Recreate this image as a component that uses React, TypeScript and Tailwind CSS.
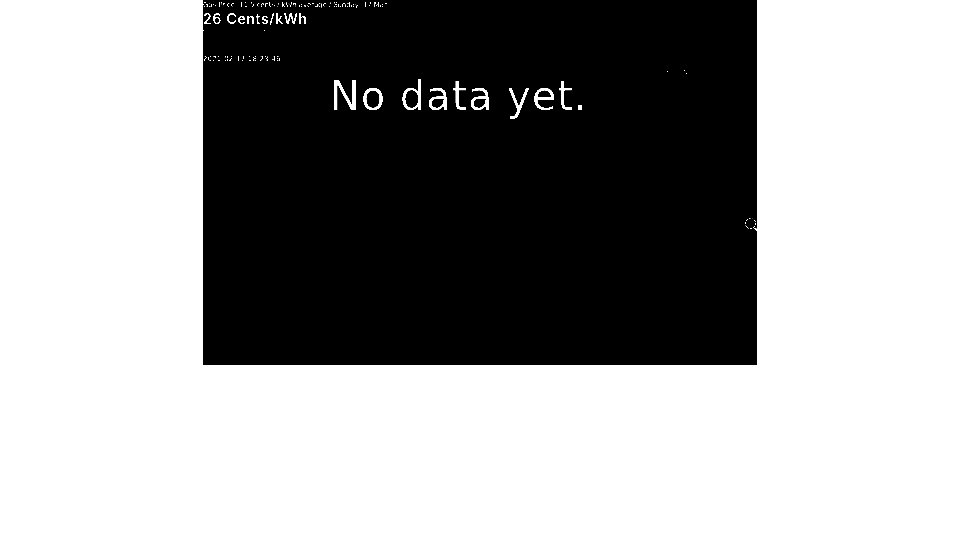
export default function App() {
  return (
    <div className="min-h-screen bg-white contrast-[20] font-['DejaVu_Sans',sans-serif]">
      <div className="relative ml-[203px] flex h-[365px] w-[554px] flex-col overflow-hidden bg-black text-white">
        <p className="h-[10px] text-[7px] leading-[10px] whitespace-nowrap text-[#dcdcdc] tracking-[-0.1px]">Gas Price: 11.5 cents / kWh average / Sunday, 17 Mar</p>
        <p className="h-[18px] text-[14px] leading-[18px] tracking-[0.75px] font-['Inter',sans-serif] font-medium">26 Cents/kWh</p>
        <div className="mt-[2px] flex h-[1px] w-[62px] justify-between">
          <span className="w-[1px] bg-white" />
          <span className="w-[1px] bg-white" />
        </div>
        <p className="mt-[23px] h-[10px] text-[7px] leading-[10px] tracking-[0.17px] text-[#dcdcdc]">2021-02-17 18:23:46</p>
        <p className="mt-[2px] pl-[127px] text-[40px] leading-[60px] whitespace-nowrap tracking-[0.9px] text-[#a0a0a0]">No data yet.</p>
        <span className="absolute top-[71px] left-[464px] size-[1px] bg-white" />
        <span className="absolute top-[70px] left-[481px] size-[1px] bg-white" />
        <span className="absolute top-[73px] left-[483px] size-[1px] bg-white" />
        <svg className="absolute top-[217px] left-[541px] size-[16px]" viewBox="0 0 16 16" fill="none" stroke="white" strokeWidth="1">
          <circle cx="6.5" cy="6.5" r="5" strokeDasharray="2 1" />
          <path d="M10.5 11l3 3" strokeWidth="2" />
        </svg>
      </div>
    </div>
  );
}
